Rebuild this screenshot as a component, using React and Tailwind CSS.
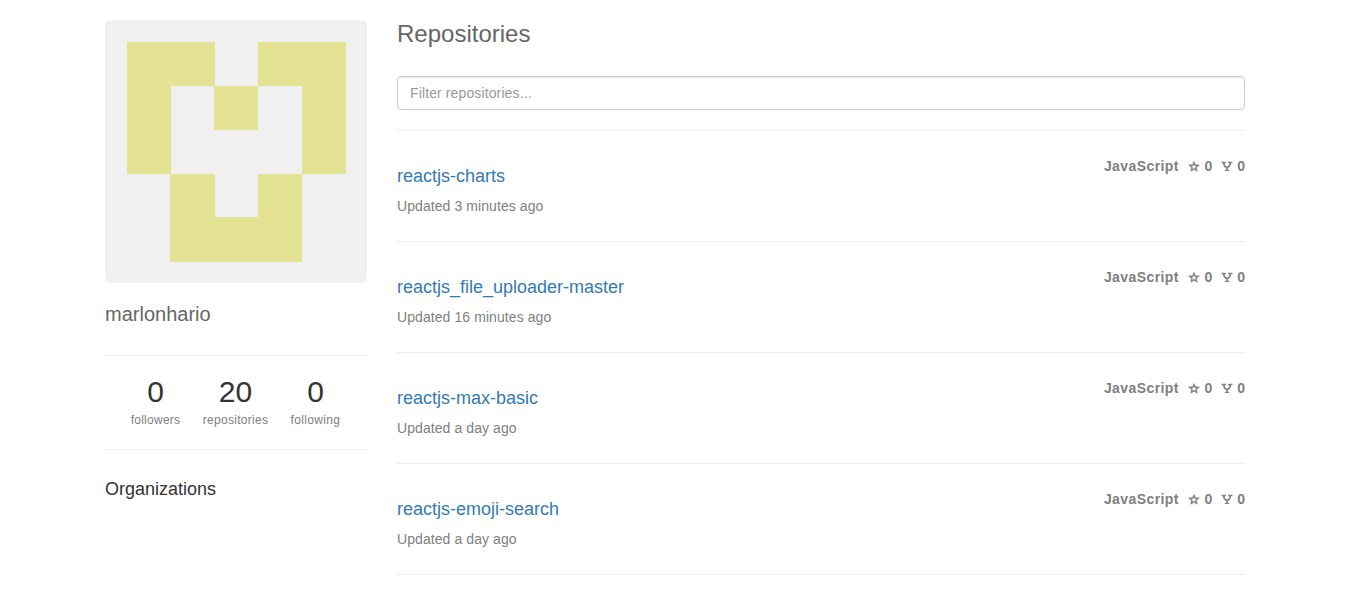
const repos = [
  { name: 'reactjs-charts', updated: '3 minutes ago' },
  { name: 'reactjs_file_uploader-master', updated: '16 minutes ago' },
  { name: 'reactjs-max-basic', updated: 'a day ago' },
  { name: 'reactjs-emoji-search', updated: 'a day ago' },
];

const stats = [
  { value: 0, label: 'followers', width: 'w-[50px]', tracking: 'tracking-[0.26px]' },
  { value: 20, label: 'repositories', width: 'w-[66px]', tracking: 'tracking-[0.28px]' },
  { value: 0, label: 'following', width: 'w-[50px]', tracking: 'tracking-[0.34px]' },
];

function Avatar() {
  return (
    <svg className="block h-[263px] w-[262px] rounded-md bg-[#f0f0f0]" viewBox="0 0 262 263" shapeRendering="crispEdges" fill="#e4e393">
      <path d="M22 22H110V66H66V154H22ZM153 22H241V154H197V66H153ZM109 66H153V110H109ZM65 154H110V197H153V154H197V242H65Z" />
    </svg>
  );
}

function StarIcon() {
  return (
    <svg className="mt-px h-[11px] w-[12px]" viewBox="0 0 12 11" fill="none" stroke="#858585" strokeWidth="1.5">
      <path d="M6 1.5L7.1 4.1L10.2 4.4L8 6.3L8.6 9.4L6 7.9L3.4 9.4L4 6.3L1.8 4.4L4.9 4.1Z" />
    </svg>
  );
}

function ForkIcon() {
  return (
    <svg className="mt-px h-[11px] w-[12px]" viewBox="0 0 12 11" fill="none" stroke="#858585">
      <path strokeWidth="1.3" d="M0.5 1.5H5M7 1.5H11.5M3.8 9.4H8.2" />
      <path strokeWidth="1.8" d="M2.9 2V3.5Q3.1 5.2 6 6.6Q8.9 5.2 9.1 3.5V2M6 6V9.5" />
    </svg>
  );
}

function Repo({ name, updated }) {
  return (
    <li className="flex h-[111px] items-start justify-between border-b border-[#eee]">
      <div className="pt-[35px]">
        <h4 className="text-[18px] leading-[20px] text-[#337ab7]">{name}</h4>
        <p className="mt-[10px] text-[14px] leading-[20px] tracking-[0.08px] text-[#808080]">Updated {updated}</p>
      </div>
      <div className="flex items-center pt-[25px] text-[14px] font-bold leading-[20px] text-[#808080]">
        <span className="mr-[9.5px] tracking-[0.42px]">JavaScript</span>
        <StarIcon /><span className="mr-[9px] ml-1">0</span>
        <ForkIcon /><span className="ml-1">0</span>
      </div>
    </li>
  );
}

export default function App() {
  return (
    <div className="flex h-[596px] gap-[30px] overflow-hidden bg-white pl-[105px] font-['Liberation_Sans',Arial,sans-serif] text-[#333]">
      <aside className="w-[262px] pt-5">
        <Avatar />
        <h3 className="mt-[19px] text-[20px] leading-[24px] text-[#666]">marlonhario</h3>
        <div className="mt-[29px] flex h-[95px] justify-center gap-[22px] border-y border-[#eee] pt-[19px] pr-px">
          {stats.map((s) => (
            <div key={s.label} className={`${s.width} text-center`}>
              <div className="text-[30px] leading-[34px]">{s.value}</div>
              <div className={`${s.tracking} mt-[3px] whitespace-nowrap text-[12px] leading-[17px] text-[#808080]`}>{s.label}</div>
            </div>
          ))}
        </div>
        <h4 className="mt-[29px] text-[18px] leading-[20px]">Organizations</h4>
      </aside>
      <main className="w-[848px] pt-5">
        <h1 className="text-[24px] leading-[28px] text-[#666]">Repositories</h1>
        <input className="mt-[28px] block h-[34px] w-full rounded border border-[#ccc] px-3 text-[14px] tracking-[0.12px] shadow-[inset_0_1px_1px_rgba(0,0,0,0.075)] outline-none placeholder:text-[#999]" placeholder="Filter repositories..." />
        <ul className="mt-5 border-t border-[#eee]">
          {repos.map((r) => <Repo key={r.name} {...r} />)}
        </ul>
      </main>
    </div>
  );
}
